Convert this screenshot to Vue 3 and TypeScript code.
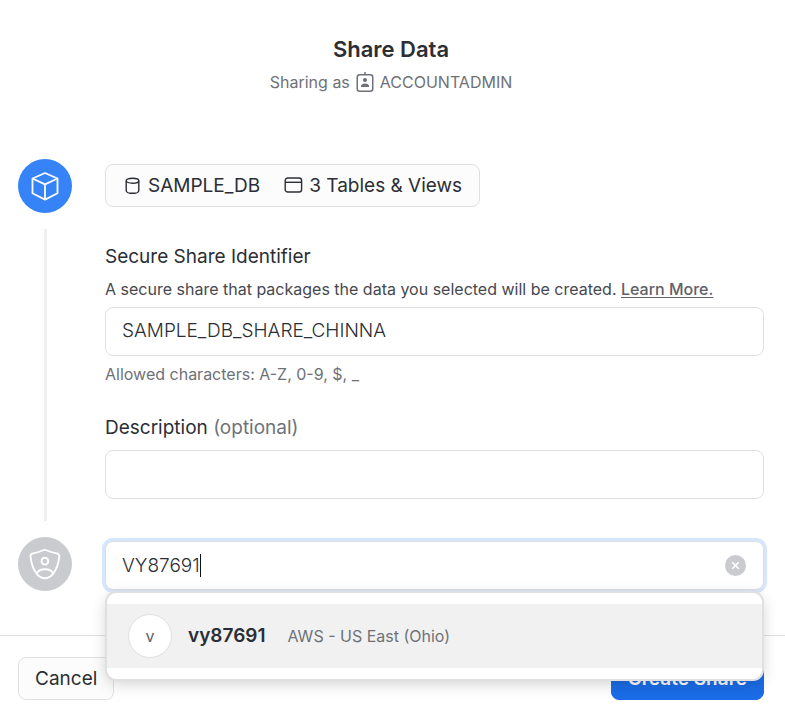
<script setup lang="ts">
import { ref, computed } from 'vue'

interface Account {
  name: string
  region: string
}

const role = 'ACCOUNTADMIN'
const identifier = ref('SAMPLE_DB_SHARE_CHINNA')
const description = ref('')
const query = ref('VY87691')

const accounts: Account[] = [{ name: 'vy87691', region: 'AWS - US East (Ohio)' }]
const matches = computed(() =>
  query.value ? accounts.filter((a) => a.name.startsWith(query.value.toLowerCase())) : [],
)

function pick(account: Account) {
  query.value = account.name.toUpperCase()
}
</script>

<template>
  <form class="dialog" @submit.prevent>
    <header class="head">
      <h1>Share Data</h1>
      <p class="role">
        <span>Sharing as</span>
        <svg width="18" height="22" viewBox="0 0 18 22" fill="none" stroke="currentColor" stroke-width="1.5" aria-hidden="true">
          <rect x="1.25" y="3.75" width="15.5" height="16.5" rx="2.5" />
          <path d="M9 1v3" />
          <circle cx="9" cy="9" r="2.1" fill="currentColor" stroke="none" />
          <path d="M5 16v-1.2c0-1.3 1.8-2.3 4-2.3s4 1 4 2.3V16z" fill="currentColor" stroke="none" />
        </svg>
        <span>{{ role }}</span>
      </p>
    </header>

    <main class="steps">
      <section class="step">
        <div class="rail">
          <span class="badge active">
            <svg width="30" height="30" viewBox="0 0 30 30" fill="none" stroke="currentColor" stroke-width="1.8" stroke-linejoin="round" aria-hidden="true">
              <path d="M15 2l12.500 5.500v14.800L15 28.600 2.500 22.300V7.500z" />
              <path d="M2.500 7.500L15 13.400l12.500-5.900M15 13.400v15.200" />
            </svg>
          </span>
          <span class="line"></span>
        </div>
        <div class="content first">
          <button type="button" class="chip">
            <span class="item">
              <svg width="16" height="18" viewBox="0 0 16 18" fill="none" stroke="currentColor" stroke-width="1.4" aria-hidden="true">
                <ellipse cx="8.500" cy="3.700" rx="6.300" ry="2.500" />
                <path d="M2.200 3.700v9.500c0 1.500 1.800 3 4 3h4.600c2.200 0 4-1.500 4-3V3.700" />
              </svg>
              SAMPLE_DB
            </span>
            <span class="item">
              <svg width="19" height="18" viewBox="0 0 19 18" fill="none" stroke="currentColor" stroke-width="1.4" aria-hidden="true">
                <rect x="1.200" y="1" width="16.400" height="14" rx="2.600" />
                <path d="M1.200 5.300h16.400" />
              </svg>
              3 Tables &amp; Views
            </span>
          </button>

          <label class="label" for="identifier">Secure Share Identifier</label>
          <p class="note">
            A secure share that packages the data you selected will be created.
            <a href="#learn-more">Learn More.</a>
          </p>
          <input id="identifier" v-model="identifier" class="field" type="text" aria-describedby="hint" />
          <p id="hint" class="hint">Allowed characters: A-Z, 0-9, $, _</p>

          <label class="label spaced" for="description">Description <span>(optional)</span></label>
          <input id="description" v-model="description" class="field tall" type="text" />
        </div>
      </section>

      <section class="step">
        <div class="rail">
          <span class="badge">
            <svg width="32" height="32" viewBox="0 0 32 32" fill="none" stroke="currentColor" stroke-width="1.9" stroke-linejoin="round" aria-hidden="true">
              <path d="M14.800 2c.6-.3 1.400-.3 2 0 3.400 1.500 7 2.600 10.800 3.400 1.800.4 2.900 1.600 2.700 3.300-.7 6.300-2.300 12.300-6.500 17.400-2.400 2.900-4.900 4.100-7.900 4.100s-5.500-1.200-7.900-4.100C3.800 21 2.200 15 1.500 8.700 1.300 7 2.400 5.800 4.200 5.400 8 4.600 11.400 3.500 14.800 2z" />
              <circle cx="15.900" cy="13.200" r="3.400" />
              <path d="M7.600 25.700c1-2.700 4.200-4.500 8.300-4.500s7.300 1.800 8.300 4.500" />
            </svg>
          </span>
        </div>
        <div class="content second">
          <label class="combo">
            <input v-model="query" class="query" type="text" aria-label="Add accounts" />
            <span class="caret"></span>
            <button type="button" class="clear" aria-label="Clear" @click="query = ''">
              <svg width="9" height="9" viewBox="0 0 9 9" stroke="currentColor" stroke-width="1.6" aria-hidden="true">
                <path d="M1.200 1.200l6.600 6.600M7.800 1.200L1.200 7.800" />
              </svg>
            </button>
          </label>
          <div v-if="matches.length" class="menu">
            <button v-for="account in matches" :key="account.name" type="button" class="option" @click="pick(account)">
              <span class="avatar">{{ account.name.charAt(0) }}</span>
              <strong>{{ account.name }}</strong>
              <span class="region">{{ account.region }}</span>
            </button>
          </div>
        </div>
      </section>
    </main>

    <footer class="foot">
      <button type="button" class="btn">Cancel</button>
      <button type="submit" class="btn primary">Create Share</button>
    </footer>
  </form>
</template>

<style>
body {
  margin: 0;
  background: #fff;
}
</style>

<style scoped>
.dialog,
.dialog * {
  box-sizing: border-box;
}
.dialog {
  font-family: Inter, 'Liberation Sans', sans-serif;
  font-size: 19px;
  line-height: 24px;
  color: #2b2e34;
}
h1,
p {
  margin: 0;
}
button,
input {
  font: inherit;
  color: inherit;
}
svg {
  flex: none;
}
.head {
  padding: 35px 21px 0 18px;
  text-align: center;
}
h1 {
  font-size: 22px;
  font-weight: 600;
  line-height: 28px;
}
.role {
  display: flex;
  align-items: center;
  justify-content: center;
  gap: 6px;
  margin-top: 8px;
  font-size: 16px;
  line-height: 22px;
  color: #6f7178;
}
.steps {
  padding: 66px 21px 44px 18px;
}
.step {
  display: flex;
  gap: 33px;
}
.rail {
  display: flex;
  flex: none;
  flex-direction: column;
  align-items: center;
  gap: 16px;
}
.badge {
  display: flex;
  align-items: center;
  justify-content: center;
  width: 54px;
  height: 54px;
  border-radius: 50%;
  background: #cacbcf;
  color: #fff;
}
.badge.active {
  background: #3583f6;
}
.line {
  flex: 1;
  width: 3px;
  margin-bottom: 16px;
  background: #f0f0f1;
}
.content {
  display: flex;
  flex: 1;
  flex-direction: column;
  align-items: stretch;
  min-width: 0;
}
.first {
  padding: 5px 0 38px;
}
.second {
  position: relative;
  padding: 4px 0 1px;
}
.chip {
  display: flex;
  align-self: flex-start;
  align-items: center;
  gap: 24px;
  height: 43px;
  padding: 0 17px 0 18px;
  border: 1px solid #e0e0e2;
  border-radius: 8px;
  background: #fcfcfc;
}
.item {
  display: flex;
  align-items: center;
  gap: 8px;
}
.item + .item {
  gap: 6px;
}
.label {
  margin-top: 38px;
}
.label.spaced {
  margin-top: 32px;
}
.label span {
  color: #6f7178;
}
.note {
  margin-top: 10px;
  font-size: 16px;
  line-height: 20px;
  color: #45484f;
}
.note a {
  font-weight: 500;
  color: #5f6168;
  text-underline-offset: 2px;
}
.field {
  width: 100%;
  height: 49px;
  margin-top: 8px;
  padding: 0 16px 2px;
  border: 1px solid #e0e0e2;
  border-radius: 8px;
  background: #fff;
  outline: none;
  font-weight: 300;
}
.field.tall {
  margin-top: 10px;
}
.hint {
  margin-top: 8px;
  font-size: 16px;
  line-height: 20px;
  color: #6f7178;
}
.combo {
  display: flex;
  align-items: center;
  height: 49px;
  padding: 0 17px 0 16px;
  border: 1px solid #dcdee3;
  border-radius: 8px;
  box-shadow: 0 0 0 3px #d6e6fc;
  background: #fff;
}
.query {
  field-sizing: content;
  padding: 0;
  border: 0;
  outline: none;
  background: none;
  font-weight: 300;
  caret-color: transparent;
}
.caret {
  width: 1px;
  height: 23px;
  background: #111;
}
.clear {
  display: flex;
  align-items: center;
  justify-content: center;
  width: 21px;
  height: 21px;
  margin-left: auto;
  padding: 0;
  border: 0;
  border-radius: 50%;
  background: #cacbcf;
  color: #fff;
}
.menu {
  position: absolute;
  z-index: 1;
  top: 56px;
  right: 2px;
  left: 2px;
  padding: 11px 0;
  border-radius: 9px;
  background: #fff;
  box-shadow:
    0 0 0 2px #dfe0e2,
    0 4px 16px rgba(0, 0, 0, 0.2);
}
.option {
  display: flex;
  align-items: center;
  width: 100%;
  height: 64px;
  padding: 0 21px;
  border: 0;
  background: #f1f1f1;
  text-align: left;
}
.avatar {
  display: flex;
  align-items: center;
  justify-content: center;
  width: 44px;
  height: 44px;
  margin-right: 16px;
  border: 1px solid #e0e0e2;
  border-radius: 50%;
  background: #fff;
  font-size: 16px;
  color: #5f6168;
}
.option strong {
  margin-right: 22px;
  font-weight: 600;
}
.region {
  font-size: 16px;
  color: #6f7178;
}
.foot {
  display: flex;
  justify-content: space-between;
  padding: 21px 21px 10px 18px;
  border-top: 1px solid #e0e0e2;
}
.btn {
  height: 43px;
  padding: 0 16px;
  border: 1px solid #e0e0e2;
  border-radius: 8px;
  background: #fcfcfc;
}
.btn.primary {
  border-color: #1a6ce7;
  background: #1a6ce7;
  font-weight: 600;
  color: #fff;
}
</style>
